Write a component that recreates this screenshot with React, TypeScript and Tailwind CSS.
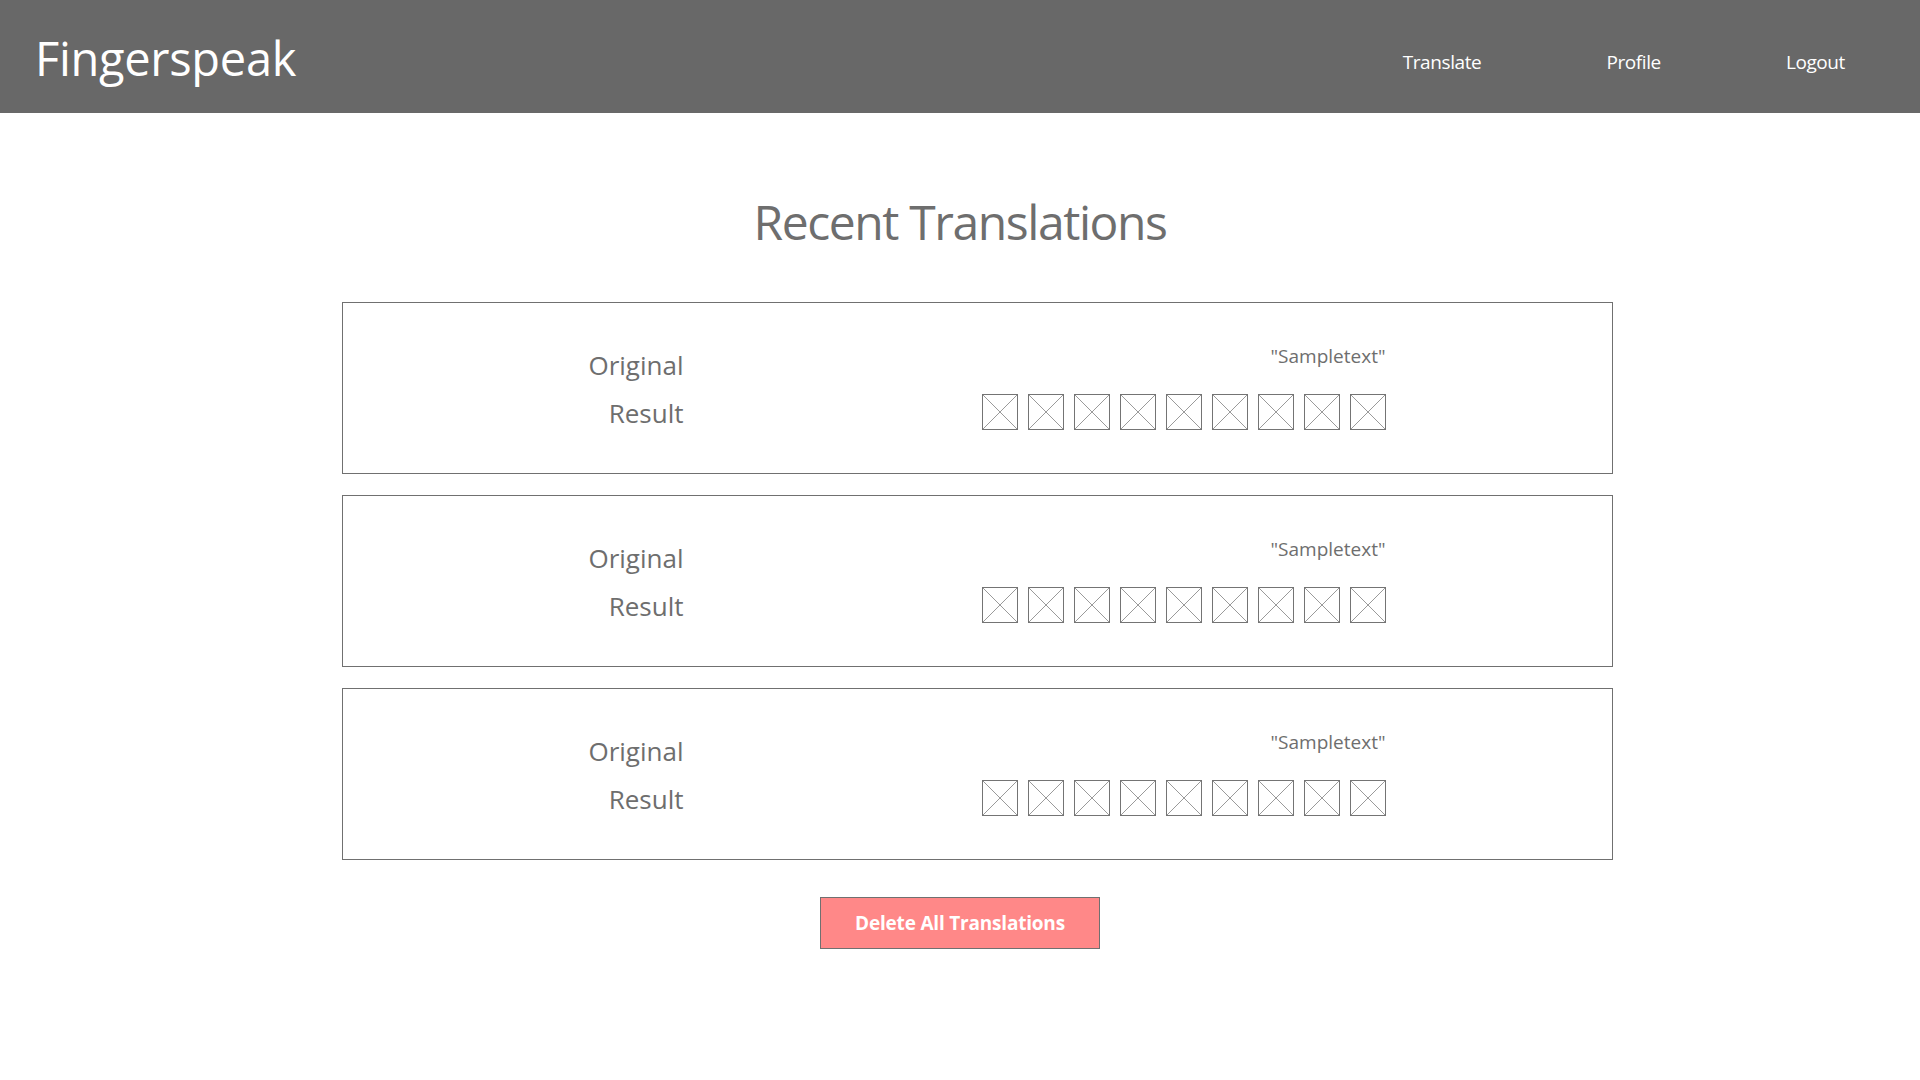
import React from "react";

const font = { fontFamily: '"Open Sans", "Noto Sans", sans-serif' };

function XBox() {
  return (
    <svg width="36" height="36" viewBox="0 0 36 36" className="block">
      <line x1="1" y1="1" x2="35" y2="35" stroke="#9a9a9a" strokeWidth="1" />
      <line x1="35" y1="1" x2="1" y2="35" stroke="#9a9a9a" strokeWidth="1" />
      <rect x="0.5" y="0.5" width="35" height="35" fill="none" stroke="#747474" strokeWidth="1" />
    </svg>
  );
}

function Card() {
  return (
    <div className="flex h-[172px] w-[1271px] border border-[#707070] bg-white">
      <div className="flex w-[341px] flex-col items-end pt-[49px] text-[26px] leading-[26px] text-[#6e6e6e]">
        <div>Original</div>
        <div className="mt-[22px]">Result</div>
      </div>
      <div className="ml-auto mr-[226px] flex flex-col items-end pt-[44px]">
        <div className="text-[19px] leading-[19px] text-[#6e6e6e]">"Sampletext"</div>
        <div className="mt-[28px] flex gap-[10px]">
          {Array.from({ length: 9 }).map((_, i) => (
            <XBox key={i} />
          ))}
        </div>
      </div>
    </div>
  );
}

export default function App() {
  return (
    <div className="min-h-[1080px] w-[1920px] bg-white" style={font}>
      <header className="flex h-[113px] items-start bg-[#686868] pl-[35px]">
        <div className="mt-[35px] text-[47px] leading-[47px] tracking-[-0.3px] text-white">Fingerspeak</div>
        <nav className="ml-auto mr-[75px] mt-[53px] flex gap-[125px] text-[19px] leading-[19px] tracking-[-0.4px] text-white">
          <span>Translate</span>
          <span>Profile</span>
          <span>Logout</span>
        </nav>
      </header>
      <main className="flex flex-col items-center">
        <h1 className="mt-[85px] text-[48px] font-normal leading-[48px] tracking-[-1.4px] text-[#6e6e6e]">Recent Translations</h1>
        <div className="ml-[34px] mt-[56px] flex flex-col gap-[21px]">
          <Card />
          <Card />
          <Card />
        </div>
        <button className="mt-[37px] flex h-[52px] w-[280px] items-center justify-center border border-[#707070] bg-[#ff8888] text-[19px] font-bold leading-[19px] tracking-[-0.2px] text-white">
          Delete All Translations
        </button>
      </main>
    </div>
  );
}
